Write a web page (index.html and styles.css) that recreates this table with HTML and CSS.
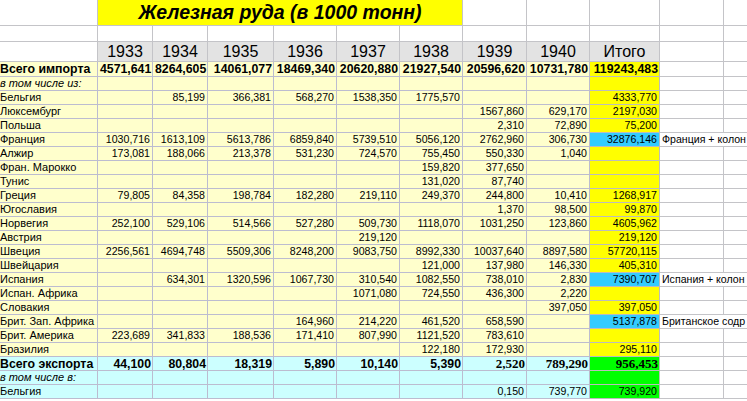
FILE: index.html
```html
<!DOCTYPE html>
<html lang="ru">
<head>
<meta charset="utf-8">
<title>Железная руда</title>
<link rel="stylesheet" href="styles.css">
</head>
<body>
<div class="sheet">
  <div class="row r-title">
    <div class="c"></div>
    <div class="c title">Железная руда (в 1000 тонн)</div>
    <div class="c"></div><div class="c"></div><div class="c"></div><div class="c"></div><div class="c last"></div>
  </div>
  <div class="row r-gap">
    <div class="c"></div><div class="c"></div><div class="c"></div><div class="c"></div><div class="c"></div><div class="c"></div>
    <div class="c"></div><div class="c"></div><div class="c"></div><div class="c"></div><div class="c"></div><div class="c last"></div>
  </div>
  <div class="row r-head">
    <div class="c"></div>
    <div class="c yr">1933</div><div class="c yr">1934</div><div class="c yr">1935</div><div class="c yr">1936</div>
    <div class="c yr">1937</div><div class="c yr">1938</div><div class="c yr">1939</div><div class="c yr">1940</div>
    <div class="c yr">Итого</div>
    <div class="c"></div><div class="c last"></div>
  </div>

  <div class="row imp strong">
    <div class="c lbl">Всего импорта</div>
    <div class="c n">4571,641</div><div class="c n">8264,605</div><div class="c n">14061,077</div><div class="c n">18469,340</div>
    <div class="c n">20620,880</div><div class="c n">21927,540</div><div class="c n">20596,620</div><div class="c n">10731,780</div>
    <div class="c n tot">119243,483</div>
    <div class="c"></div><div class="c last"></div>
  </div>
  <div class="row imp">
    <div class="c lbl it">в том числе из:</div>
    <div class="c"></div><div class="c"></div><div class="c"></div><div class="c"></div>
    <div class="c"></div><div class="c"></div><div class="c"></div><div class="c"></div>
    <div class="c tot"></div>
    <div class="c"></div><div class="c last"></div>
  </div>
  <div class="row imp">
    <div class="c lbl">Бельгия</div>
    <div class="c n"></div><div class="c n">85,199</div><div class="c n">366,381</div><div class="c n">568,270</div>
    <div class="c n">1538,350</div><div class="c n">1775,570</div><div class="c n"></div><div class="c n"></div>
    <div class="c n tot">4333,770</div>
    <div class="c"></div><div class="c last"></div>
  </div>
  <div class="row imp">
    <div class="c lbl">Люксембург</div>
    <div class="c n"></div><div class="c n"></div><div class="c n"></div><div class="c n"></div>
    <div class="c n"></div><div class="c n"></div><div class="c n">1567,860</div><div class="c n">629,170</div>
    <div class="c n tot">2197,030</div>
    <div class="c"></div><div class="c last"></div>
  </div>
  <div class="row imp">
    <div class="c lbl">Польша</div>
    <div class="c n"></div><div class="c n"></div><div class="c n"></div><div class="c n"></div>
    <div class="c n"></div><div class="c n"></div><div class="c n">2,310</div><div class="c n">72,890</div>
    <div class="c n tot">75,200</div>
    <div class="c"></div><div class="c last"></div>
  </div>
  <div class="row imp">
    <div class="c lbl">Франция</div>
    <div class="c n">1030,716</div><div class="c n">1613,109</div><div class="c n">5613,786</div><div class="c n">6859,840</div>
    <div class="c n">5739,510</div><div class="c n">5056,120</div><div class="c n">2762,960</div><div class="c n">306,730</div>
    <div class="c n blue">32876,146</div>
    <div class="c note">Франция + колон</div>
  </div>
  <div class="row imp">
    <div class="c lbl">Алжир</div>
    <div class="c n">173,081</div><div class="c n">188,066</div><div class="c n">213,378</div><div class="c n">531,230</div>
    <div class="c n">724,570</div><div class="c n">755,450</div><div class="c n">550,330</div><div class="c n">1,040</div>
    <div class="c n tot"></div>
    <div class="c"></div><div class="c last"></div>
  </div>
  <div class="row imp">
    <div class="c lbl">Фран. Марокко</div>
    <div class="c n"></div><div class="c n"></div><div class="c n"></div><div class="c n"></div>
    <div class="c n"></div><div class="c n">159,820</div><div class="c n">377,650</div><div class="c n"></div>
    <div class="c n tot"></div>
    <div class="c"></div><div class="c last"></div>
  </div>
  <div class="row imp">
    <div class="c lbl">Тунис</div>
    <div class="c n"></div><div class="c n"></div><div class="c n"></div><div class="c n"></div>
    <div class="c n"></div><div class="c n">131,020</div><div class="c n">87,740</div><div class="c n"></div>
    <div class="c n tot"></div>
    <div class="c"></div><div class="c last"></div>
  </div>
  <div class="row imp">
    <div class="c lbl">Греция</div>
    <div class="c n">79,805</div><div class="c n">84,358</div><div class="c n">198,784</div><div class="c n">182,280</div>
    <div class="c n">219,110</div><div class="c n">249,370</div><div class="c n">244,800</div><div class="c n">10,410</div>
    <div class="c n tot">1268,917</div>
    <div class="c"></div><div class="c last"></div>
  </div>
  <div class="row imp">
    <div class="c lbl">Югославия</div>
    <div class="c n"></div><div class="c n"></div><div class="c n"></div><div class="c n"></div>
    <div class="c n"></div><div class="c n"></div><div class="c n">1,370</div><div class="c n">98,500</div>
    <div class="c n tot">99,870</div>
    <div class="c"></div><div class="c last"></div>
  </div>
  <div class="row imp">
    <div class="c lbl">Норвегия</div>
    <div class="c n">252,100</div><div class="c n">529,106</div><div class="c n">514,566</div><div class="c n">527,280</div>
    <div class="c n">509,730</div><div class="c n">1118,070</div><div class="c n">1031,250</div><div class="c n">123,860</div>
    <div class="c n tot">4605,962</div>
    <div class="c"></div><div class="c last"></div>
  </div>
  <div class="row imp">
    <div class="c lbl">Австрия</div>
    <div class="c n"></div><div class="c n"></div><div class="c n"></div><div class="c n"></div>
    <div class="c n">219,120</div><div class="c n"></div><div class="c n"></div><div class="c n"></div>
    <div class="c n tot">219,120</div>
    <div class="c"></div><div class="c last"></div>
  </div>
  <div class="row imp">
    <div class="c lbl">Швеция</div>
    <div class="c n">2256,561</div><div class="c n">4694,748</div><div class="c n">5509,306</div><div class="c n">8248,200</div>
    <div class="c n">9083,750</div><div class="c n">8992,330</div><div class="c n">10037,640</div><div class="c n">8897,580</div>
    <div class="c n tot">57720,115</div>
    <div class="c"></div><div class="c last"></div>
  </div>
  <div class="row imp">
    <div class="c lbl">Швейцария</div>
    <div class="c n"></div><div class="c n"></div><div class="c n"></div><div class="c n"></div>
    <div class="c n"></div><div class="c n">121,000</div><div class="c n">137,980</div><div class="c n">146,330</div>
    <div class="c n tot">405,310</div>
    <div class="c"></div><div class="c last"></div>
  </div>
  <div class="row imp">
    <div class="c lbl">Испания</div>
    <div class="c n"></div><div class="c n">634,301</div><div class="c n">1320,596</div><div class="c n">1067,730</div>
    <div class="c n">310,540</div><div class="c n">1082,550</div><div class="c n">738,010</div><div class="c n">2,830</div>
    <div class="c n blue">7390,707</div>
    <div class="c note">Испания + колон</div>
  </div>
  <div class="row imp">
    <div class="c lbl">Испан. Африка</div>
    <div class="c n"></div><div class="c n"></div><div class="c n"></div><div class="c n"></div>
    <div class="c n">1071,080</div><div class="c n">724,550</div><div class="c n">436,300</div><div class="c n">2,220</div>
    <div class="c n tot"></div>
    <div class="c"></div><div class="c last"></div>
  </div>
  <div class="row imp">
    <div class="c lbl">Словакия</div>
    <div class="c n"></div><div class="c n"></div><div class="c n"></div><div class="c n"></div>
    <div class="c n"></div><div class="c n"></div><div class="c n"></div><div class="c n">397,050</div>
    <div class="c n tot">397,050</div>
    <div class="c"></div><div class="c last"></div>
  </div>
  <div class="row imp">
    <div class="c lbl">Брит. Зап. Африка</div>
    <div class="c n"></div><div class="c n"></div><div class="c n"></div><div class="c n">164,960</div>
    <div class="c n">214,220</div><div class="c n">461,520</div><div class="c n">658,590</div><div class="c n"></div>
    <div class="c n blue">5137,878</div>
    <div class="c note">Британское содр</div>
  </div>
  <div class="row imp">
    <div class="c lbl">Брит. Америка</div>
    <div class="c n">223,689</div><div class="c n">341,833</div><div class="c n">188,536</div><div class="c n">171,410</div>
    <div class="c n">807,990</div><div class="c n">1121,520</div><div class="c n">783,610</div><div class="c n"></div>
    <div class="c n tot"></div>
    <div class="c"></div><div class="c last"></div>
  </div>
  <div class="row imp">
    <div class="c lbl">Бразилия</div>
    <div class="c n"></div><div class="c n"></div><div class="c n"></div><div class="c n"></div>
    <div class="c n"></div><div class="c n">122,180</div><div class="c n">172,930</div><div class="c n"></div>
    <div class="c n tot">295,110</div>
    <div class="c"></div><div class="c last"></div>
  </div>

  <div class="row exp strong">
    <div class="c lbl">Всего экспорта</div>
    <div class="c n">44,100</div><div class="c n">80,804</div><div class="c n">18,319</div><div class="c n">5,890</div>
    <div class="c n">10,140</div><div class="c n">5,390</div><div class="c n serif">2,520</div><div class="c n serif">789,290</div>
    <div class="c n green serif">956,453</div>
    <div class="c"></div><div class="c last"></div>
  </div>
  <div class="row exp">
    <div class="c lbl it">в том числе в:</div>
    <div class="c"></div><div class="c"></div><div class="c"></div><div class="c"></div>
    <div class="c"></div><div class="c"></div><div class="c"></div><div class="c"></div>
    <div class="c green"></div>
    <div class="c"></div><div class="c last"></div>
  </div>
  <div class="row exp">
    <div class="c lbl">Бельгия</div>
    <div class="c n"></div><div class="c n"></div><div class="c n"></div><div class="c n"></div>
    <div class="c n"></div><div class="c n"></div><div class="c n">0,150</div><div class="c n">739,770</div>
    <div class="c n green">739,920</div>
    <div class="c"></div><div class="c last"></div>
  </div>
</div>
</body>
</html>
```

FILE: styles.css
```css
html, body {
  margin: 0;
  padding: 0;
  background: #ffffff;
  overflow: hidden;
}

.sheet {
  display: grid;
  grid-template-columns: 98px 55px 55px 66px 63px 63px 63px 64px 63px 70px 64px 23px;
  grid-template-rows: 26px 16px 20px 15px;
  grid-auto-rows: 14px;
  width: 747px;
  font-family: "Liberation Sans", Arial, sans-serif;
  color: #000000;
}

.row {
  display: contents;
}

.c {
  box-sizing: border-box;
  border-right: 1px solid #c4c4c8;
  border-bottom: 1px solid #c4c4c8;
  padding: 0 2px;
  font-size: 10.6px;
  line-height: 13px;
  white-space: nowrap;
  overflow: hidden;
  background: #ffffff;
}

.c.last {
  border-right: none;
}

.n {
  text-align: right;
}

.lbl {
  padding-left: 0;
  font-size: 11px;
}

.it {
  font-style: italic;
}

/* title row */
.title {
  grid-column: span 6;
  background: #ffff00;
  text-align: center;
  font-weight: bold;
  font-style: italic;
  font-size: 19.5px;
  line-height: 23px;
  padding-top: 1px;
}

/* year header row */
.yr {
  background: #e3e3e3;
  text-align: center;
  font-size: 16px;
  line-height: 18px;
  padding-top: 1px;
}

/* data regions */
.imp > .c:nth-child(-n+9) {
  background: #ffffcc;
  border-color: #bcbcd0;
}

.exp > .c:nth-child(-n+9) {
  background: #ccffff;
  border-color: #bcbcd0;
}

.imp > .tot {
  background: #ffff00;
  border-color: #bcbcbc;
}

.imp > .blue {
  background: #33ccff;
  border-color: #bcbcbc;
}

.exp > .green {
  background: #00ff00;
  border-color: #bcbcbc;
}

.strong > .c {
  font-weight: bold;
  font-size: 12.3px;
  line-height: 14px;
  padding-right: 1px;
}

.strong > .lbl {
  padding-right: 0;
}

.strong > .serif {
  font-family: "Liberation Serif", "Times New Roman", serif;
  font-size: 13px;
}

.note {
  grid-column: span 2;
  padding-left: 2px;
  border-right: none;
}
```
